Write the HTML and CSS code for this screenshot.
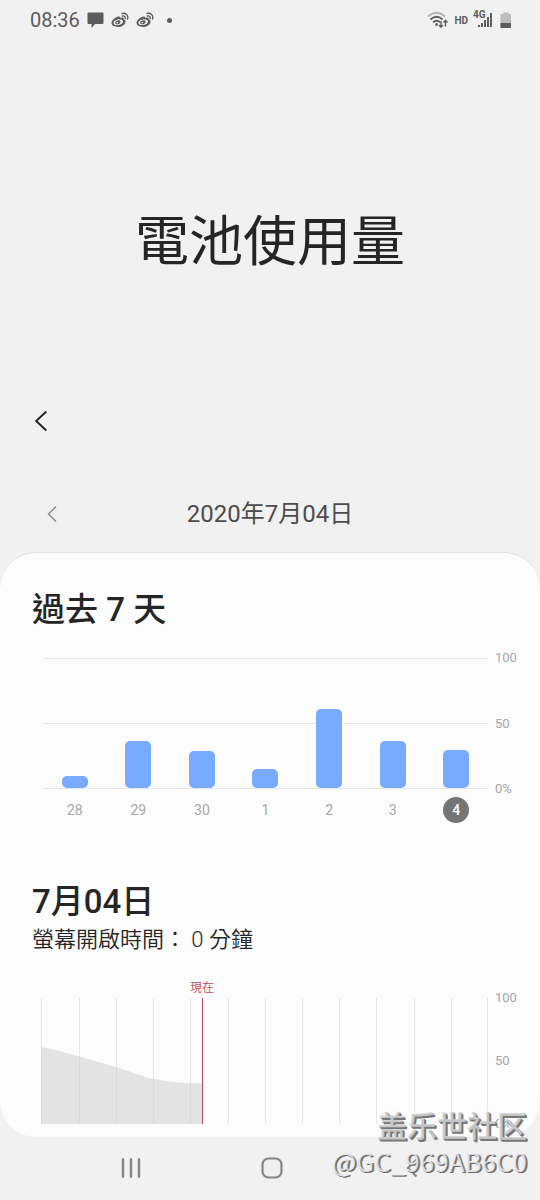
FILE: index.html
```html
<!DOCTYPE html>
<html lang="zh-Hant">
<head>
<meta charset="utf-8">
<meta name="viewport" content="width=device-width, initial-scale=1">
<title>電池使用量</title>
<link rel="stylesheet" href="styles.css">
</head>
<body>
<div class="screen">
  <div class="status">
    <div class="status-left">
      <time class="clock">08:36</time>
      <svg class="ico-chat" viewBox="0 0 17 17" width="17" height="17"><path d="M1.500 0.500h14q1 0 1 1v9.500q0 1-1 1H8l-3.500 4V12h-3q-1 0-1-1V1.500q0-1 1-1z" fill="#5c5c5c"/></svg>
      <svg class="ico-weibo" viewBox="0 0 18 16" width="18" height="16"><use href="#weibo"/></svg>
      <svg class="ico-weibo" viewBox="0 0 18 16" width="18" height="16"><use href="#weibo"/></svg>
      <span class="dot"></span>
    </div>
    <div class="status-right">
      <svg viewBox="0 0 22 18" width="22" height="18" fill="none">
        <path d="M1 5.500Q9.500-2 18 5.500" stroke="#b3b3b3" stroke-width="1.800"/>
        <path d="M3.500 8.500Q9.500 3 15.500 8.500M6 11.300q3.500-3 7 0" stroke="#5c5c5c" stroke-width="1.800"/>
        <circle cx="9.500" cy="13.500" r="1.400" fill="#5c5c5c"/>
        <path d="M14 10v6m-2-2 2 2.200 2-2.200M18.500 15.500v-6m-2 2 2-2.200 2 2.200" stroke="#5c5c5c" stroke-width="1.400"/>
      </svg>
      <span class="hd">HD</span>
      <span class="signal">
        <svg viewBox="0 0 20 18" width="20" height="18" fill="#5c5c5c"><path d="M5 14h2v2H5zM8 12h2v4H8zM11 9h2v7h-2zM14 6h2v10h-2zM17 2h2v14h-2z"/></svg>
        <span class="net">4G</span>
      </span>
      <svg viewBox="0 0 12 17" width="12" height="17"><path d="M3.500 0.500h5v1.500h2.500v14H0.500V2h3z" fill="#bdbdbd"/><path d="M0.500 11h10.500v4q0 1-1 1H1.500q-1 0-1-1z" fill="#5c5c5c"/></svg>
    </div>
  </div>
  <svg width="0" height="0" class="defs"><defs><g id="weibo">
    <path fill="#5c5c5c" fill-rule="evenodd" d="M7.500 4.600C8.500 4.200 9.200 4.800 8.900 6c2-.8 4-.6 3.700 1.200 3 1 2.300 4.400-.5 6.200-4.600 3-11.600 1.300-11.600-2.600C.5 8.300 4.700 4.900 7.500 4.600zM7 7.400c-2.700.3-4.700 1.800-4.500 3.500.2 1.600 2.400 2.500 5 2.200 2.700-.3 4.700-1.900 4.500-3.500C11.800 8 9.600 7.100 7 7.400z"/>
    <path fill="#5c5c5c" fill-rule="evenodd" d="M7 8.400c-2 .2-3.200 1.400-2.900 2.600.3 1.100 1.700 1.600 3.200 1.200 1.600-.4 2.600-1.700 2.300-2.700C9.300 8.700 8.300 8.200 7 8.400zM6.100 10c.7-.2 1.200.1 1.100.6-.1.500-.6.900-1.200.8-.9-.1-.7-1.200.1-1.400z"/>
    <path fill="none" stroke="#5c5c5c" stroke-width="1.400" stroke-linecap="round" d="M11 1.500c3.600-1.200 6.700 1.900 5.500 5.500M11.500 4c1.800-.4 3 .8 2.600 2.600"/>
  </g></defs></svg>

  <header class="hero"><h1>電池使用量</h1></header>
  <div class="toolbar">
    <button class="icon-btn" type="button" aria-label="返回"><svg viewBox="0 0 14 22" width="14" height="22"><path d="M12.300 1.500 2.200 11l10.100 9.500" fill="none" stroke="#252525" stroke-width="2"/></svg></button>
  </div>
  <div class="date-nav">
    <button class="icon-btn" type="button" aria-label="前一天"><svg viewBox="0 0 10 18" width="10" height="18"><path d="M9 1.500 1.500 9 9 16.500" fill="none" stroke="#8c8c8c" stroke-width="1.500"/></svg></button>
    <span class="date">2020年7月04日</span>
  </div>

  <main class="card">
    <section class="week">
      <h2>過去 7 天</h2>
      <div class="chart">
        <div class="plot bars">
          <div class="col"><span class="bar" style="height:9%"></span></div>
          <div class="col"><span class="bar" style="height:36%"></span></div>
          <div class="col"><span class="bar" style="height:28.500%"></span></div>
          <div class="col"><span class="bar" style="height:14.500%"></span></div>
          <div class="col"><span class="bar" style="height:61%"></span></div>
          <div class="col"><span class="bar" style="height:36.500%"></span></div>
          <div class="col"><span class="bar" style="height:29.500%"></span></div>
        </div>
        <div class="scale"><span>100</span><span>50</span><span>0%</span></div>
      </div>
      <div class="days">
        <span>28</span><span>29</span><span>30</span><span>1</span><span>2</span><span>3</span><span><b class="today">4</b></span>
      </div>
    </section>
    <section class="day">
      <h2>7月04日</h2>
      <p class="screen-time">螢幕開啟時間： 0 分鐘</p>
      <div class="now-row"><span class="now">現在</span></div>
      <div class="chart level-chart">
        <svg class="plot level" viewBox="0 0 447 126" preserveAspectRatio="none">
          <path d="M0.500 0v126M38.500 0v126M75.500 0v126M112.500 0v126M149.500 0v126M187.500 0v126M224.500 0v126M261.500 0v126M298.500 0v126M335.500 0v126M373.500 0v126M410.500 0v126M446.500 0v126" stroke="#e6e6e6" fill="none"/>
          <path d="M0 49 10 51 40 59 75 69 108 80 120 82 131 84 145 85 161 85.500V126H0z" fill="#d2d2d2" fill-opacity=".6"/>
          <path d="M161.500 0v126" stroke="#b0505e" fill="none"/>
        </svg>
        <div class="scale"><span>100</span><span>50</span><span>0%</span></div>
      </div>
    </section>
  </main>

  <nav class="navbar">
    <button class="icon-btn" type="button" aria-label="最近"><svg viewBox="0 0 20 20" width="20" height="20"><path d="M2 1.300v17.400M10 1.300v17.400M18 1.300v17.400" stroke="#858585" stroke-width="2.400" stroke-linecap="round"/></svg></button>
    <button class="icon-btn" type="button" aria-label="首頁"><svg viewBox="0 0 22 22" width="22" height="22"><rect x="1.500" y="1.500" width="19" height="19" rx="6" fill="none" stroke="#858585" stroke-width="2.200"/></svg></button>
    <button class="icon-btn" type="button" aria-label="返回"><svg viewBox="0 0 12 20" width="12" height="20"><path d="M10.500 1.500 2 10l8.500 8.500" fill="none" stroke="#858585" stroke-width="2.200"/></svg></button>
  </nav>
  <div class="watermark"><span class="site">盖乐世社区</span><span class="user">@GC_969AB6C0</span></div>
</div>
</body>
</html>
```

FILE: styles.css
```css
* { box-sizing: border-box; }
body {
  margin: 0;
  background: #f1f1f1;
  color: #252525;
  font-family: Roboto, "Noto Sans CJK TC", sans-serif;
}
h1, h2, p { margin: 0; }
svg { display: block; }
.defs { position: absolute; }
.screen { position: relative; min-height: 100vh; display: flex; flex-direction: column; }
.icon-btn { display: flex; justify-content: center; padding: 0; border: 0; background: none; }

.status { display: flex; justify-content: space-between; align-items: center; height: 40px; padding: 0 28px 0 30px; color: #5c5c5c; }
.status-left, .status-right { display: flex; align-items: center; }
.status-left { gap: 7px; }
.clock { font-size: 20px; line-height: 24px; }
.dot { width: 5px; height: 5px; margin-left: 6px; border-radius: 50%; background: #5c5c5c; }
.status-right { gap: 5px; }
.hd { font-size: 10px; font-weight: 700; }
.signal { position: relative; margin-right: 2px; }
.net { position: absolute; left: 0; top: 0; font-size: 10px; line-height: 8px; font-weight: 700; background: #f1f1f1; }

.hero { display: flex; justify-content: center; align-items: center; height: 360px; padding-top: 46px; }
.hero h1 { font-size: 54px; line-height: 80px; font-weight: 400; }
.toolbar { display: flex; align-items: center; height: 42px; padding-left: 34px; }
.date-nav { display: grid; grid-template-columns: 1fr auto 1fr; align-items: center; height: 110px; padding: 34px 47px 0; }
.date-nav .icon-btn { justify-content: flex-start; }
.date { font-size: 24px; line-height: 36px; color: #4c4c4c; }

.card { padding: 32px 0 13px; border-top: 1px solid #e0e0e0; border-radius: 36px; background: #fcfcfc; }
h2 { padding-left: 32px; font-size: 33px; line-height: 50px; font-weight: 500; }
.chart { display: grid; grid-template-columns: 1fr 52px; padding-left: 43px; }
.week .chart { margin-top: 23px; }
.plot { width: 100%; }
.bars { display: grid; grid-template-columns: repeat(7, 1fr); height: 131px; padding-bottom: 1px; background: linear-gradient(#e6e6e6, #e6e6e6) 0 0 / 100% 1px no-repeat, linear-gradient(#e6e6e6, #e6e6e6) 0 50% / 100% 1px no-repeat, linear-gradient(#e6e6e6, #e6e6e6) 0 100% / 100% 1px no-repeat; }
.col { display: flex; justify-content: center; align-items: flex-end; }
.bar { width: 26px; border-radius: 5px; background: #78aaff; }
.scale { display: flex; flex-direction: column; justify-content: space-between; margin: -8px 0; padding-left: 7px; font-size: 13px; line-height: 16px; color: #a6a6a6; }
.days { display: grid; grid-template-columns: repeat(7, 1fr); align-items: center; height: 26px; margin: 8px 52px 0 43px; font-size: 14px; text-align: center; color: #a6a6a6; }
.today { display: inline-block; width: 26px; border-radius: 50%; background: #757575; color: #fff; line-height: 26px; font-weight: 500; }

.day { padding-top: 54px; }
.screen-time { padding-left: 32px; font-size: 22px; line-height: 26px; font-weight: 350; }
.now-row { display: grid; grid-template-columns: 161fr 286fr; padding: 26px 52px 0 41px; }
.now { justify-self: end; margin-right: -12px; font-size: 12px; line-height: 18px; font-weight: 350; color: #b84a5a; }
.level-chart { padding-left: 41px; margin-top: 1px; }
.level { height: 126px; }

.navbar { display: flex; justify-content: space-between; align-items: center; flex: 1; min-height: 62px; padding: 0 117px 2px 120px; }
.navbar .icon-btn { width: 22px; }
.watermark { position: absolute; right: 13px; bottom: 22px; display: flex; flex-direction: column; align-items: flex-end; pointer-events: none; }
.site { font: 500 30px/40px "Noto Sans CJK SC", sans-serif; color: rgba(208, 208, 208, .9); text-shadow: 1px 1px 0 #777, 2px 2px 0 #777, -1px -1px 0 #fafafa; }
.user { font: 400 26px/34px "Noto Sans CJK SC", sans-serif; color: rgba(238, 238, 238, .85); text-shadow: 1px 1px 0 #6a6a6a, 2px 1px 0 #8a8a8a; }
```
